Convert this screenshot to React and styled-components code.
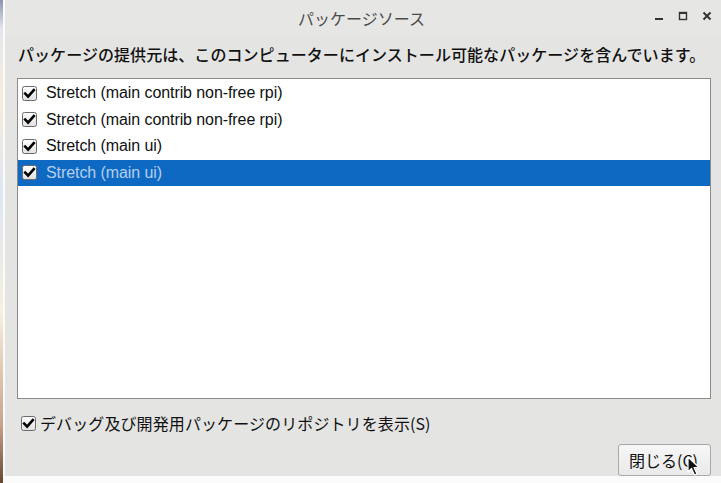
import React from 'react'
import styled, { createGlobalStyle } from 'styled-components'

const GlobalStyle = createGlobalStyle`
  html, body { margin: 0; padding: 0; }
  body {
    width: 721px;
    height: 483px;
    overflow: hidden;
    font-family: "Liberation Sans", "Noto Sans CJK JP", sans-serif;
  }
`

const sources = [
  { name: 'Stretch (main contrib non-free rpi)', checked: true },
  { name: 'Stretch (main contrib non-free rpi)', checked: true },
  { name: 'Stretch (main ui)', checked: true },
  { name: 'Stretch (main ui)', checked: true, selected: true },
]

export default function App() {
  return (
    <>
      <GlobalStyle />
      <Desktop>
        <Window>
          <TitleBar>
            <Title>パッケージソース</Title>
            <Controls>
              <ControlButton aria-label="minimize">
                <svg width="10" height="10" viewBox="0 0 10 10">
                  <rect x="1" y="7" width="8" height="2" fill="#333" />
                </svg>
              </ControlButton>
              <ControlButton aria-label="maximize">
                <svg width="10" height="10" viewBox="0 0 10 10">
                  <rect x="1.5" y="1.5" width="7" height="7" fill="none" stroke="#333" strokeWidth="1.4" />
                  <rect x="1" y="1" width="8" height="2" fill="#333" />
                </svg>
              </ControlButton>
              <ControlButton aria-label="close">
                <svg width="10" height="10" viewBox="0 0 10 10">
                  <path d="M1.5 1.5 L8.5 8.5 M8.5 1.5 L1.5 8.5" stroke="#333" strokeWidth="2" />
                </svg>
              </ControlButton>
            </Controls>
          </TitleBar>

          <Body>
            <Description>
              パッケージの提供元は、このコンピューターにインストール可能なパッケージを含んでいます。
            </Description>

            <ListBox>
              {sources.map((s, i) => (
                <Row key={i} $selected={s.selected}>
                  <CheckBox checked={s.checked} />
                  <RowLabel $selected={s.selected}>{s.name}</RowLabel>
                </Row>
              ))}
            </ListBox>

            <OptionRow>
              <CheckBox checked />
              <OptionLabel>デバッグ及び開発用パッケージのリポジトリを表示(S)</OptionLabel>
            </OptionRow>

            <ButtonRow>
              <PushButton>
                閉じる(C)
                <Cursor width="14" height="20" viewBox="0 0 14 20">
                  <path d="M1 1 L1 16 L4.5 12.5 L7.5 19 L10 18 L7 11.5 L12 11.5 Z"
                    fill="#111" stroke="#fff" strokeWidth="1.2" strokeLinejoin="round" />
                </Cursor>
              </PushButton>
            </ButtonRow>
          </Body>
        </Window>
      </Desktop>
    </>
  )
}

function CheckBox({ checked }) {
  return (
    <Box>
      <svg width="15" height="15" viewBox="0 0 15 15">
        <defs>
          <linearGradient id="cbg" x1="0" y1="0" x2="0" y2="1">
            <stop offset="0" stopColor="#ffffff" />
            <stop offset="1" stopColor="#e0e0e0" />
          </linearGradient>
        </defs>
        <rect x="0.5" y="0.5" width="14" height="14" rx="2" fill="url(#cbg)" stroke="#6a6a6a" />
        {checked && (
          <path d="M3.2 7.6 L6.1 10.5 L11.8 4" fill="none" stroke="#000" strokeWidth="2.6"
            strokeLinecap="square" strokeLinejoin="miter" />
        )}
      </svg>
    </Box>
  )
}

const Desktop = styled.div`
  display: flex;
  width: 721px;
  height: 483px;
  background: linear-gradient(180deg, #8d94b0 0%, #e4e6ee 6%, #f7ecd9 20%, #dde6f2 40%, #f6efdc 65%, #c9a28c 88%, #6a4632 100%);
`

const Window = styled.div`
  flex: 1;
  margin-left: 3px;
  display: flex;
  flex-direction: column;
  background: #e4e4e3;
  border-left: 2px solid #fbfbfb;
  border-bottom: 7px solid #fbfbfb;
`

const TitleBar = styled.div`
  position: relative;
  height: 35px;
  display: flex;
  align-items: center;
  justify-content: center;
  background: #e6e7e5;
`

const Title = styled.div`
  font-family: "Noto Sans CJK JP", sans-serif;
  font-size: 16px;
  color: #4a4a4a;
  margin-right: 3px;
`

const Controls = styled.div`
  position: absolute;
  right: 9px;
  top: 11px;
  display: flex;
  gap: 14px;
`

const ControlButton = styled.span`
  display: flex;
  width: 10px;
  height: 10px;
`

const Body = styled.div`
  flex: 1;
  display: flex;
  flex-direction: column;
  padding: 0 10px 0 12px;
`

const Description = styled.div`
  font-family: "Noto Sans CJK JP", sans-serif;
  font-size: 16px;
  font-weight: 500;
  color: #111;
  line-height: 20px;
  margin: 9px 0 0 1px;
  letter-spacing: 0.06px;
  white-space: nowrap;
`

const ListBox = styled.div`
  margin-top: 14px;
  height: 318px;
  background: #fff;
  border: 1px solid #8a8a8a;
  display: flex;
  flex-direction: column;
  padding-top: 1px;
`

const Row = styled.div`
  height: 26.5px;
  display: flex;
  align-items: center;
  padding-left: 4px;
  gap: 9px;
  background: ${p => (p.$selected ? '#0e69c3' : 'transparent')};
`

const RowLabel = styled.span`
  font-family: "Liberation Sans", "Noto Sans CJK JP", sans-serif;
  font-size: 16px;
  color: ${p => (p.$selected ? '#b5cff0' : '#111')};
  letter-spacing: -0.08px;
`

const Box = styled.span`
  display: flex;
  width: 15px;
  height: 15px;
`

const OptionRow = styled.div`
  display: flex;
  align-items: center;
  gap: 4px;
  margin: 12px 0 0 4px;
`

const OptionLabel = styled.span`
  font-family: "Noto Sans CJK JP", sans-serif;
  font-size: 16px;
  color: #111;
  letter-spacing: 0.1px;
`

const ButtonRow = styled.div`
  display: flex;
  justify-content: flex-end;
  margin-top: 9px;
`

const PushButton = styled.button`
  position: relative;
  width: 93px;
  height: 32px;
  border: 1px solid #a9a9a9;
  border-radius: 3px;
  background: linear-gradient(180deg, #f7f7f7 0%, #e9e9e9 100%);
  font-family: "Noto Sans CJK JP", sans-serif;
  font-size: 16px;
  color: #111;
  text-align: left;
  padding: 0 0 0 10px;
  white-space: nowrap;
`

const Cursor = styled.svg`
  position: absolute;
  left: 68px;
  top: 11px;
`
